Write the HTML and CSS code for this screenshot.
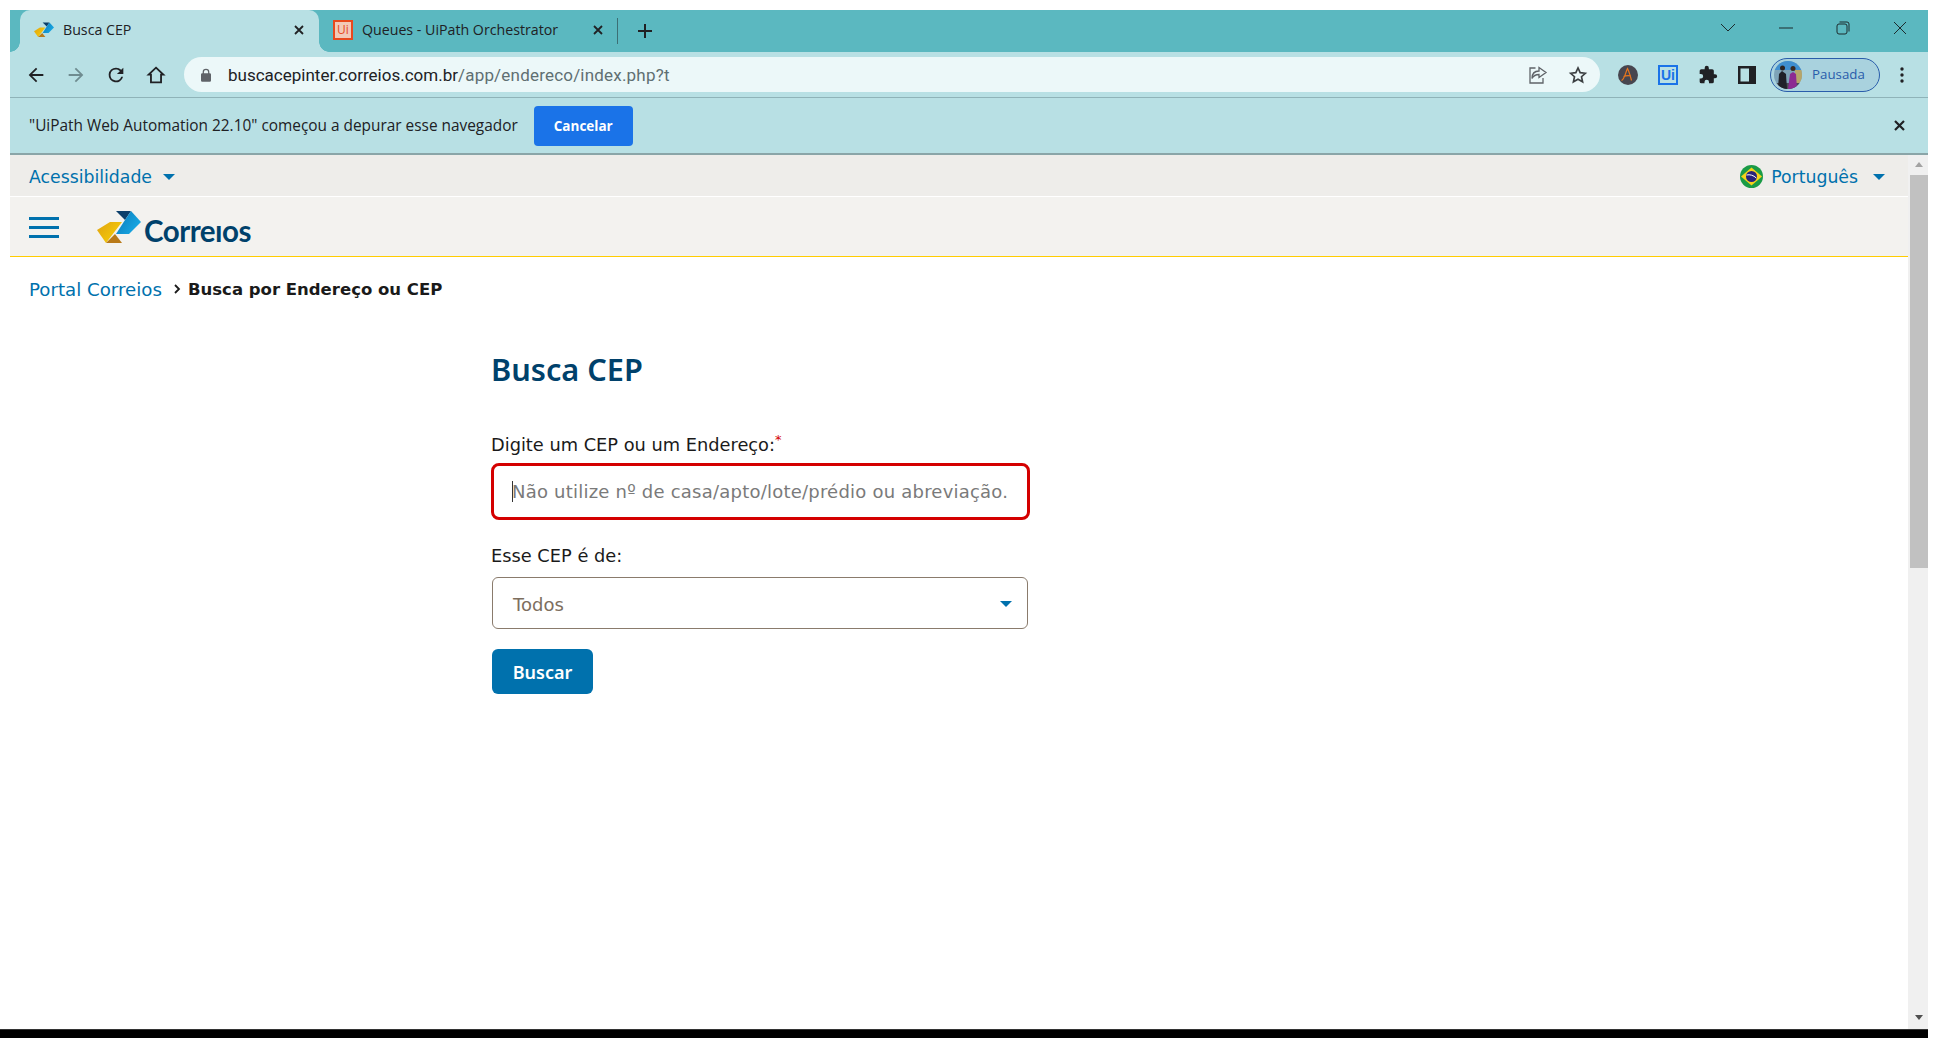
FILE: index.html
```html
<!DOCTYPE html>
<html lang="pt-BR">

<head>
  <meta charset="UTF-8">
  <meta name="viewport" content="width=device-width, initial-scale=1.0">
  <title>Busca CEP</title>
  <link rel="stylesheet" href="styles.css">
</head>

<body>
  <svg class="defs" width="0" height="0">
    <defs>
      <linearGradient id="gBlue" x1="0" y1="0" x2="1" y2="0.6">
        <stop offset="0" stop-color="#0a78b8" />
        <stop offset="1" stop-color="#18a9e4" />
      </linearGradient>
      <linearGradient id="gYellow" x1="0" y1="0" x2="1" y2="0.7">
        <stop offset="0" stop-color="#e0a310" />
        <stop offset="1" stop-color="#f7cf0a" />
      </linearGradient>
      <symbol id="logo-mark" viewBox="0 0 44 33">
        <path fill="#0b3f6b" d="M19 0h15l-6 9z" />
        <path fill="url(#gBlue)" d="M34 0l10 11-12 12H19l9-14z" />
        <path fill="url(#gYellow)" d="M0 19l13-8h12L9 32z" />
        <path fill="#b97a18" d="M9 32l9-9 7 9z" />
      </symbol>
    </defs>
  </svg>

  <div class="window">
    <!-- abas -->
    <div class="tabstrip">
      <div class="tab tab-active">
        <svg class="favicon" width="20" height="16"><use href="#logo-mark" /></svg>
        <span class="tab-title">Busca CEP</span>
        <svg class="tab-close" width="10" height="10" viewBox="0 0 10 10"><path d="M1 1l8 8M9 1l-8 8" /></svg>
      </div>
      <div class="tab">
        <span class="ui-favicon">Ui</span>
        <span class="tab-title">Queues - UiPath Orchestrator</span>
        <svg class="tab-close" width="10" height="10" viewBox="0 0 10 10"><path d="M1 1l8 8M9 1l-8 8" /></svg>
      </div>
      <div class="tab-sep"></div>
      <svg class="new-tab" width="14" height="14" viewBox="0 0 14 14"><path d="M7 0v14M0 7h14" /></svg>
      <div class="win-controls">
        <svg class="win-btn" width="16" height="10" viewBox="0 0 16 10"><path d="M1 1l7 7 7-7" /></svg>
        <svg class="win-btn" width="14" height="10" viewBox="0 0 14 10"><path d="M0 5h14" /></svg>
        <svg class="win-btn" width="14" height="14" viewBox="0 0 14 14"><rect x="1" y="3" width="10" height="10" rx="2" /><path d="M3.500 1H11a2 2 0 0 1 2 2v7.500" /></svg>
        <svg class="win-btn" width="14" height="14" viewBox="0 0 14 14"><path d="M1 1l12 12M13 1L1 13" /></svg>
      </div>
    </div>

    <!-- barra de endereco -->
    <div class="toolbar">
      <div class="nav-icons">
        <svg width="22" height="22" viewBox="0 0 24 24"><path fill="#202124" d="M20 11H7.800l5.600-5.600L12 4l-8 8 8 8 1.400-1.400L7.800 13H20z" /></svg>
        <svg width="22" height="22" viewBox="0 0 24 24"><path fill="#6f8c90" d="M4 11h12.200l-5.600-5.600L12 4l8 8-8 8-1.400-1.400 5.600-5.600H4z" /></svg>
        <svg width="22" height="22" viewBox="0 0 24 24"><path fill="#202124" d="M17.650 6.350A7.960 7.960 0 0 0 12 4a8 8 0 1 0 7.730 10h-2.080A6 6 0 1 1 12 6c1.660 0 3.140.690 4.220 1.780L13 11h7V4z" /></svg>
        <svg width="22" height="22" viewBox="0 0 24 24"><path fill="none" stroke="#202124" stroke-width="2" d="M12 4l8 7.500h-2.500V20h-11v-8.500H4z" /></svg>
      </div>
      <div class="omnibox">
        <svg class="lock" width="10" height="14" viewBox="0 0 12 16"><path fill="#5f6368" d="M2 6V4.500a4 4 0 0 1 8 0V6h.5A1.500 1.500 0 0 1 12 7.500v7a1.500 1.500 0 0 1-1.500 1.500h-9A1.500 1.500 0 0 1 0 14.500v-7A1.500 1.500 0 0 1 1.500 6zm1.500 0h5V4.500a2.500 2.500 0 0 0-5 0z" /></svg>
        <span class="url"><span class="url-host">buscacepinter.correios.com.br</span>/app/endereco/index.php?t</span>
        <svg class="omni-share" width="20" height="20" viewBox="0 0 20 20"><path fill="none" stroke="#5f6368" stroke-width="1.300" d="M7.500 3H2v15h13v-5M11 2.500l7 5-7 5V9.500c-3 0-5.500 1-7 4 0-4.500 2.500-7.500 7-7.500z" /></svg>
        <svg class="omni-star" width="20" height="20" viewBox="0 0 24 24"><path fill="none" stroke="#3c4043" stroke-width="2" d="M12 3.500l2.600 5.700 6.200.7-4.600 4.200 1.300 6.100L12 17.100l-5.500 3.100 1.300-6.100-4.600-4.200 6.200-.7z" /></svg>
      </div>
      <div class="ext-icons">
        <svg width="20" height="20" viewBox="0 0 20 20">
          <circle cx="10" cy="10" r="10" fill="#47464f" />
          <path fill="none" stroke="#e8761e" stroke-width="1.200" d="M3.500 15.500c3-1 4-8 6-12 1.500 3 3 8 4 12M5.500 11.500c3-1 5-1 7.500-.5" />
        </svg>
        <span class="ui-ext">Ui</span>
        <svg width="20" height="20" viewBox="0 0 24 24"><path fill="#202124" d="M20.500 11H19V7a2 2 0 0 0-2-2h-4V3.500a2.500 2.500 0 0 0-5 0V5H4a2 2 0 0 0-2 2v3.800h1.500a2.700 2.700 0 0 1 0 5.400H2V20a2 2 0 0 0 2 2h3.800v-1.500a2.700 2.700 0 0 1 5.400 0V22H17a2 2 0 0 0 2-2v-4h1.500a2.500 2.500 0 0 0 0-5z" /></svg>
        <svg width="18" height="18" viewBox="0 0 18 18"><path fill="#202124" fill-rule="evenodd" d="M0 0h18v18H0zM2.500 2.500v13H11v-13z" /></svg>
      </div>
      <div class="profile">
        <svg class="avatar" width="28" height="28" viewBox="0 0 28 28">
          <clipPath id="avatarClip"><circle cx="14" cy="14" r="14" /></clipPath>
          <g clip-path="url(#avatarClip)">
            <rect width="28" height="28" fill="#7ea3b8" />
            <rect width="28" height="9" fill="#3f8fd0" />
            <rect x="21" y="9" width="7" height="13" fill="#b6a56a" />
            <rect y="22" width="28" height="6" fill="#4a4c55" />
            <path fill="#20212a" d="M4 28l1-15 3-3 4 3 1 15z" />
            <circle cx="8.500" cy="7" r="2.500" fill="#2c2422" />
            <path fill="#8c2a92" d="M14 28l2-15 3-2 3 2 1 15z" />
            <circle cx="19" cy="7.500" r="2.500" fill="#3a2a22" />
          </g>
        </svg>
        <span class="profile-name">Pausada</span>
      </div>
      <svg class="kebab" width="4" height="16" viewBox="0 0 4 16"><circle cx="2" cy="2" r="1.700" /><circle cx="2" cy="8" r="1.700" /><circle cx="2" cy="14" r="1.700" /></svg>
    </div>

    <!-- aviso de depuracao -->
    <div class="infobar">
      <span class="info-text">"UiPath Web Automation 22.10" começou a depurar esse navegador</span>
      <button class="info-cancel">Cancelar</button>
      <svg class="info-close" width="11" height="11" viewBox="0 0 11 11"><path d="M1 1l9 9M10 1l-9 9" /></svg>
    </div>

    <div class="viewport">
      <div class="site">
        <div class="topbar">
          <span class="topbar-link">Acessibilidade<i class="caret"></i></span>
          <span class="topbar-link lang">
            <svg class="flag" width="23" height="23" viewBox="0 0 23 23">
              <circle cx="11.500" cy="11.500" r="11.500" fill="#1a9b46" />
              <path fill="#f6d21a" d="M11.500 2.500L22 11.500l-10.500 9-10.500-9z" />
              <circle cx="11.500" cy="11.500" r="5.500" fill="#27237a" />
              <path fill="none" stroke="#fff" stroke-width="1" d="M6.500 10c3.500-.8 7 .3 9.800 3" />
            </svg>
            Português<i class="caret"></i>
          </span>
        </div>
        <header class="site-header">
          <div class="burger"><span></span><span></span><span></span></div>
          <div class="brand">
            <svg class="brand-mark" width="44" height="33"><use href="#logo-mark" /></svg>
            <span class="brand-name">Correıos</span>
          </div>
        </header>
        <nav class="crumbs">
          <a class="crumb-link">Portal Correios</a>
          <svg class="crumb-sep" width="7" height="10" viewBox="0 0 7 10"><path d="M1 1l4 4-4 4" /></svg>
          <b class="crumb-current">Busca por Endereço ou CEP</b>
        </nav>
        <main class="form-col">
          <h1 class="form-title">Busca CEP</h1>
          <label class="field-label label-cep">Digite um CEP ou um Endereço:<sup class="req">*</sup></label>
          <div class="input-wrap">
            <input class="cep-input" type="text" placeholder="Não utilize nº de casa/apto/lote/prédio ou abreviação.">
            <span class="text-caret"></span>
          </div>
          <label class="field-label label-tipo">Esse CEP é de:</label>
          <div class="select-box">
            <span>Todos</span>
            <i class="caret"></i>
          </div>
          <button class="btn-buscar">Buscar</button>
        </main>
      </div>
      <div class="scrollbar">
        <i class="sb-up"></i>
        <div class="sb-thumb"></div>
        <i class="sb-down"></i>
      </div>
    </div>
  </div>
  <div class="taskbar"></div>
</body>

</html>
```

FILE: styles.css
```css
* {
  box-sizing: border-box;
}

html,
body {
  margin: 0;
  height: 1038px;
  overflow: hidden;
  background: #fff;
}

body {
  padding-top: 10px;
  font-family: "DejaVu Sans", "Liberation Sans", sans-serif;
}

.defs {
  position: absolute;
}

.window {
  margin: 0 10px;
  height: 1019px;
  display: flex;
  flex-direction: column;
}

.taskbar {
  height: 9px;
  margin-right: 10px;
  background: #000;
  border-top: 1px solid #333;
}

/* abas */
.tabstrip {
  height: 42px;
  flex: none;
  display: flex;
  align-items: center;
  padding-left: 10px;
  background: #5bb8c0;
  font-family: "Open Sans", sans-serif;
  font-size: 14.200px;
  color: #202124;
}

.tab {
  width: 299px;
  height: 42px;
  display: flex;
  align-items: center;
  gap: 9px;
  padding: 0 15px 3px 14px;
  position: relative;
}

.tab-active {
  background: #b8e0e4;
  border-radius: 10px 10px 0 0;
}

.tab-active::before,
.tab-active::after {
  content: "";
  position: absolute;
  bottom: 0;
  width: 10px;
  height: 10px;
  background: radial-gradient(circle at 0 0, #5bb8c0 9.500px, #b8e0e4 10px);
}

.tab-active::before {
  left: -10px;
}

.tab-active::after {
  right: -10px;
  transform: scaleX(-1);
}

.tab-title {
  flex: 1;
  white-space: nowrap;
}

.tab-close {
  fill: none;
  stroke: #202124;
  stroke-width: 1.800;
}

.ui-favicon {
  width: 20px;
  height: 20px;
  border: 2px solid #e8491d;
  color: #e8491d;
  background: #f2c9b8;
  font-size: 12px;
  line-height: 16px;
  text-align: center;
}

.tab-sep {
  width: 1px;
  height: 26px;
  margin-left: -1px;
  background: #3c6f75;
}

.new-tab {
  margin-left: 20px;
  fill: none;
  stroke: #202124;
  stroke-width: 2;
}

.win-controls {
  margin-left: auto;
  display: flex;
  align-items: center;
  gap: 43px;
  padding: 0 21px 6px 0;
}

.win-btn {
  fill: none;
  stroke: #1d2a2c;
  stroke-width: 1;
}

/* barra de endereco */
.toolbar {
  height: 46px;
  flex: none;
  display: flex;
  align-items: center;
  background: #b8e0e4;
  border-bottom: 1px solid #8fb3b8;
}

.nav-icons {
  width: 174px;
  display: flex;
  gap: 18px;
  padding-left: 15px;
}

.omnibox {
  width: 1416px;
  height: 35px;
  display: flex;
  align-items: center;
  padding: 0 12px 0 17px;
  border-radius: 18px;
  background: #ecf8f9;
}

.url {
  flex: 1;
  margin-left: 17px;
  font-family: "Roboto", sans-serif;
  font-size: 17px;
  letter-spacing: .2px;
  color: #5f6f72;
}

.url-host {
  color: #202124;
  letter-spacing: 0;
}

.omni-share {
  margin-right: 20px;
}

.ext-icons {
  display: flex;
  align-items: center;
  gap: 20px;
  margin-left: 18px;
}

.ui-ext {
  width: 20px;
  height: 20px;
  border: 2px solid #1a73e8;
  color: #1a73e8;
  font: bold 14px/16px "Liberation Sans", sans-serif;
  text-align: center;
}

.profile {
  width: 110px;
  height: 34px;
  margin-left: 14px;
  display: flex;
  align-items: center;
  gap: 10px;
  padding-left: 3px;
  border: 1.500px solid #2a5dab;
  border-radius: 17px;
  background: #a9d2de;
  color: #2a5dab;
  font-family: "Open Sans", sans-serif;
  font-size: 13.300px;
}

.profile-name {
  padding-bottom: 2px;
}

.kebab {
  margin-left: 20px;
  fill: #202124;
}

/* aviso de depuracao */
.infobar {
  height: 57px;
  flex: none;
  display: flex;
  align-items: center;
  padding-left: 19px;
  background: #b8e0e4;
  font-family: "Open Sans", sans-serif;
  font-size: 15.400px;
  color: #202124;
  border-bottom: 2px solid #8aa5a8;
}

.info-cancel {
  width: 99px;
  height: 40px;
  margin-left: 16px;
  border: none;
  border-radius: 4px;
  background: #1a73e8;
  color: #fff;
  font-family: "Open Sans", sans-serif;
  font-size: 13.500px;
  font-weight: 700;
}

.info-close {
  margin-left: auto;
  margin-right: 23px;
  fill: none;
  stroke: #202124;
  stroke-width: 2.200;
}

/* pagina */
.viewport {
  flex: 1;
  min-height: 0;
  display: flex;
  background: #fff;
}

.site {
  flex: 1;
}

.topbar {
  height: 42px;
  display: flex;
  align-items: center;
  justify-content: space-between;
  padding: 2px 23px 0 19px;
  background: #eeedea;
  border-bottom: 1px solid #fff;
}

.topbar-link {
  display: flex;
  align-items: center;
  color: #0071ad;
  font-size: 17.300px;
}

.caret {
  width: 0;
  height: 0;
  margin-left: 11px;
  border-left: 6px solid transparent;
  border-right: 6px solid transparent;
  border-top: 6.500px solid #0071ad;
}

.lang .caret {
  margin-left: 15px;
}

.flag {
  margin-right: 8px;
}

.site-header {
  height: 60px;
  display: flex;
  align-items: center;
  padding: 2px 0 0 19px;
  background: #f3f2ef;
  border-bottom: 1px solid #ffcc00;
}

.burger {
  width: 30px;
  display: flex;
  flex-direction: column;
  gap: 6px;
}

.burger span {
  height: 3px;
  background: #0071ad;
}

.brand {
  margin-left: 38px;
  display: flex;
  align-items: flex-end;
}

.brand-name {
  margin-left: 3px;
  font-family: "Lato", sans-serif;
  font-size: 29.500px;
  line-height: 26px;
  font-weight: 700;
  color: #00416b;
  letter-spacing: -.5px;
}

.crumbs {
  display: flex;
  align-items: center;
  height: 24px;
  margin: 20px 0 0 19px;
}

.crumb-link {
  color: #0071ad;
  font-size: 18.200px;
}

.crumb-sep {
  margin: 0 7px 0 12px;
  fill: none;
  stroke: #1a1a1a;
  stroke-width: 1.800;
}

.crumb-current {
  color: #1a1a1a;
  font-size: 16.500px;
}

.form-col {
  width: 539px;
  margin: 49px 0 0 481px;
}

.form-title {
  margin: 0;
  font-family: "Noto Sans", sans-serif;
  font-size: 30.700px;
  line-height: 38px;
  font-weight: 600;
  color: #00416b;
}

.field-label {
  display: block;
  font-size: 17.800px;
  line-height: 22px;
  color: #1a1a1a;
}

.label-cep {
  margin-top: 46px;
}

.label-tipo {
  margin-top: 25px;
}

.req {
  color: #d40000;
  font-size: 13px;
  line-height: 0;
}

.input-wrap {
  position: relative;
  margin-top: 7px;
}

.cep-input {
  display: block;
  width: 100%;
  height: 57px;
  padding: 0 18px;
  border: 3px solid #d40000;
  border-radius: 8px;
  outline: none;
  font-family: inherit;
  font-size: 18px;
  letter-spacing: .22px;
}

.cep-input::placeholder {
  color: #7a7a7a;
  opacity: 1;
}

.text-caret {
  position: absolute;
  left: 21px;
  top: 18px;
  width: 1px;
  height: 21px;
  background: #333;
}

.select-box {
  display: flex;
  align-items: center;
  justify-content: space-between;
  width: 536px;
  height: 52px;
  margin: 10px 0 0 1px;
  padding: 2px 15px 0 20px;
  border: 1px solid #8a7b6c;
  border-radius: 6px;
  color: #7d6e5e;
  font-size: 18px;
}

.btn-buscar {
  display: block;
  width: 101px;
  height: 45px;
  margin: 20px 0 0 1px;
  border: none;
  border-radius: 6px;
  background: #0071ad;
  color: #fff;
  font-family: "Noto Sans", sans-serif;
  font-size: 18px;
  font-weight: 600;
}

/* barra de rolagem */
.scrollbar {
  width: 20px;
  flex: none;
  display: flex;
  flex-direction: column;
  align-items: center;
  background: #f0f0f0;
}

.sb-up,
.sb-down {
  width: 0;
  height: 0;
  margin-left: 2px;
  border-left: 4.500px solid transparent;
  border-right: 4.500px solid transparent;
}

.sb-up {
  margin-top: 7px;
  border-bottom: 5px solid #a3a3a3;
}

.sb-thumb {
  width: 18px;
  height: 393px;
  margin: 8px 0 0 2px;
  background: #c1c1c1;
}

.sb-down {
  margin-top: auto;
  margin-bottom: 9px;
  border-top: 5px solid #505050;
}
```
